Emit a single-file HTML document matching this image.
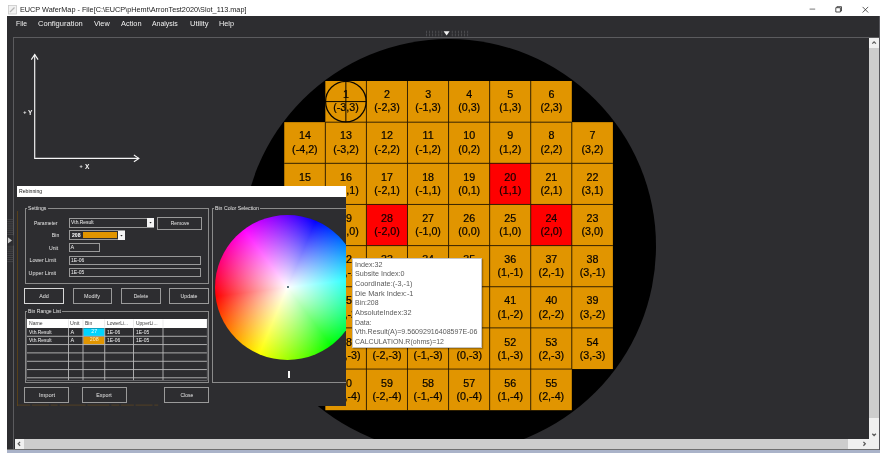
<!DOCTYPE html><html><head><meta charset="utf-8"><title>EUCP WaferMap</title><style>html,body{margin:0;padding:0}body{width:884px;height:456px;position:relative;overflow:hidden;background:#fff;font-family:"Liberation Sans", sans-serif;-webkit-font-smoothing:antialiased}span{display:block}</style></head><body><div style="position:absolute;left:0;top:0;width:884px;height:456px;will-change:transform"><div style="position:absolute;left:0.00px;top:0.00px;width:884.00px;height:456.00px;background:#fff"></div><svg style="position:absolute;left:7.8px;top:4.6px" width="10" height="10" viewBox="0 0 10 10"><rect x="0.5" y="0.5" width="8" height="8.5" fill="#f2f2f2" stroke="#c9c9c9" stroke-width="0.8"/><path d="M2 7 L6.5 2.5" stroke="#b5b5b5" stroke-width="1.2"/></svg><span id="t0" style="position:absolute;white-space:pre;line-height:1;font-size:7.8px;color:#1a1a1a;top:6.00px;left:19.50px;transform-origin:0 50%;transform:scaleX(0.9339);">EUCP WaferMap - File[C:\EUCP\pHemt\ArronTest2020\Slot_113.map]</span><svg style="position:absolute;left:800px;top:0" width="84" height="16" viewBox="0 0 84 16"><path d="M9.6 9.1 H15.2" stroke="#555" stroke-width="0.8" fill="none"/><path d="M35.8 7.7 h4.6 v4.3 h-4.6 z M36.9 7.7 v-1.0 h4.6 v4.3 h-1.1" stroke="#333" stroke-width="0.85" fill="none"/><path d="M62.6 6.9 l5.6 5.6 M68.2 6.9 l-5.6 5.6" stroke="#333" stroke-width="0.8" fill="none"/></svg><div style="position:absolute;left:7.00px;top:16.00px;width:873.00px;height:433.00px;background:#2d2d30"></div><div style="position:absolute;left:7.00px;top:448.50px;width:873.00px;height:1.60px;background:#6f6f6f"></div><div style="position:absolute;left:7.00px;top:450.00px;width:873.00px;height:2.80px;background:#aab3c9"></div><div style="position:absolute;left:879.20px;top:16.00px;width:0.90px;height:434.00px;background:#55555a"></div><span id="t1" style="position:absolute;white-space:pre;line-height:1;font-size:8.1px;color:#f1f1f1;top:19.65px;left:15.60px;transform-origin:0 50%;transform:scaleX(0.8354);">File</span><span id="t2" style="position:absolute;white-space:pre;line-height:1;font-size:8.1px;color:#f1f1f1;top:19.65px;left:37.60px;transform-origin:0 50%;transform:scaleX(0.9303);">Configuration</span><span id="t3" style="position:absolute;white-space:pre;line-height:1;font-size:8.1px;color:#f1f1f1;top:19.65px;left:94.00px;transform-origin:0 50%;transform:scaleX(0.9020);">View</span><span id="t4" style="position:absolute;white-space:pre;line-height:1;font-size:8.1px;color:#f1f1f1;top:19.65px;left:120.60px;transform-origin:0 50%;transform:scaleX(0.9156);">Action</span><span id="t5" style="position:absolute;white-space:pre;line-height:1;font-size:8.1px;color:#f1f1f1;top:19.65px;left:152.40px;transform-origin:0 50%;transform:scaleX(0.8560);">Analysis</span><span id="t6" style="position:absolute;white-space:pre;line-height:1;font-size:8.1px;color:#f1f1f1;top:19.65px;left:189.70px;transform-origin:0 50%;transform:scaleX(0.9345);">Utility</span><span id="t7" style="position:absolute;white-space:pre;line-height:1;font-size:8.1px;color:#f1f1f1;top:19.65px;left:219.40px;transform-origin:0 50%;transform:scaleX(0.9006);">Help</span><svg style="position:absolute;left:424px;top:29px" width="46" height="8" viewBox="424 29 46 8"><rect x="426.00" y="30.80" width="0.9" height="0.9" fill="#5d5d60"/><rect x="451.80" y="30.80" width="0.9" height="0.9" fill="#5d5d60"/><rect x="426.00" y="32.30" width="0.9" height="0.9" fill="#5d5d60"/><rect x="451.80" y="32.30" width="0.9" height="0.9" fill="#5d5d60"/><rect x="426.00" y="33.80" width="0.9" height="0.9" fill="#5d5d60"/><rect x="451.80" y="33.80" width="0.9" height="0.9" fill="#5d5d60"/><rect x="426.00" y="35.30" width="0.9" height="0.9" fill="#5d5d60"/><rect x="451.80" y="35.30" width="0.9" height="0.9" fill="#5d5d60"/><rect x="429.08" y="30.80" width="0.9" height="0.9" fill="#5d5d60"/><rect x="454.88" y="30.80" width="0.9" height="0.9" fill="#5d5d60"/><rect x="429.08" y="32.30" width="0.9" height="0.9" fill="#5d5d60"/><rect x="454.88" y="32.30" width="0.9" height="0.9" fill="#5d5d60"/><rect x="429.08" y="33.80" width="0.9" height="0.9" fill="#5d5d60"/><rect x="454.88" y="33.80" width="0.9" height="0.9" fill="#5d5d60"/><rect x="429.08" y="35.30" width="0.9" height="0.9" fill="#5d5d60"/><rect x="454.88" y="35.30" width="0.9" height="0.9" fill="#5d5d60"/><rect x="432.16" y="30.80" width="0.9" height="0.9" fill="#5d5d60"/><rect x="457.96" y="30.80" width="0.9" height="0.9" fill="#5d5d60"/><rect x="432.16" y="32.30" width="0.9" height="0.9" fill="#5d5d60"/><rect x="457.96" y="32.30" width="0.9" height="0.9" fill="#5d5d60"/><rect x="432.16" y="33.80" width="0.9" height="0.9" fill="#5d5d60"/><rect x="457.96" y="33.80" width="0.9" height="0.9" fill="#5d5d60"/><rect x="432.16" y="35.30" width="0.9" height="0.9" fill="#5d5d60"/><rect x="457.96" y="35.30" width="0.9" height="0.9" fill="#5d5d60"/><rect x="435.24" y="30.80" width="0.9" height="0.9" fill="#5d5d60"/><rect x="461.04" y="30.80" width="0.9" height="0.9" fill="#5d5d60"/><rect x="435.24" y="32.30" width="0.9" height="0.9" fill="#5d5d60"/><rect x="461.04" y="32.30" width="0.9" height="0.9" fill="#5d5d60"/><rect x="435.24" y="33.80" width="0.9" height="0.9" fill="#5d5d60"/><rect x="461.04" y="33.80" width="0.9" height="0.9" fill="#5d5d60"/><rect x="435.24" y="35.30" width="0.9" height="0.9" fill="#5d5d60"/><rect x="461.04" y="35.30" width="0.9" height="0.9" fill="#5d5d60"/><rect x="438.32" y="30.80" width="0.9" height="0.9" fill="#5d5d60"/><rect x="464.12" y="30.80" width="0.9" height="0.9" fill="#5d5d60"/><rect x="438.32" y="32.30" width="0.9" height="0.9" fill="#5d5d60"/><rect x="464.12" y="32.30" width="0.9" height="0.9" fill="#5d5d60"/><rect x="438.32" y="33.80" width="0.9" height="0.9" fill="#5d5d60"/><rect x="464.12" y="33.80" width="0.9" height="0.9" fill="#5d5d60"/><rect x="438.32" y="35.30" width="0.9" height="0.9" fill="#5d5d60"/><rect x="464.12" y="35.30" width="0.9" height="0.9" fill="#5d5d60"/><rect x="441.40" y="30.80" width="0.9" height="0.9" fill="#5d5d60"/><rect x="467.20" y="30.80" width="0.9" height="0.9" fill="#5d5d60"/><rect x="441.40" y="32.30" width="0.9" height="0.9" fill="#5d5d60"/><rect x="467.20" y="32.30" width="0.9" height="0.9" fill="#5d5d60"/><rect x="441.40" y="33.80" width="0.9" height="0.9" fill="#5d5d60"/><rect x="467.20" y="33.80" width="0.9" height="0.9" fill="#5d5d60"/><rect x="441.40" y="35.30" width="0.9" height="0.9" fill="#5d5d60"/><rect x="467.20" y="35.30" width="0.9" height="0.9" fill="#5d5d60"/><path d="M443.6 31.2 L449.6 31.2 L446.6 35.4 Z" fill="#f0f0f0"/></svg><div style="position:absolute;left:13.40px;top:36.90px;width:866.20px;height:1.10px;background:#5b5b5e"></div><div style="position:absolute;left:13.40px;top:36.90px;width:1.10px;height:412.00px;background:#5b5b5e"></div><svg style="position:absolute;left:7px;top:215px" width="7" height="50" viewBox="7 215 7 50"><rect x="7.3" y="219.30" width="5.9" height="0.75" fill="#4a4a4d"/><rect x="7.3" y="221.40" width="5.9" height="0.75" fill="#4a4a4d"/><rect x="7.3" y="223.50" width="5.9" height="0.75" fill="#4a4a4d"/><rect x="7.3" y="225.60" width="5.9" height="0.75" fill="#4a4a4d"/><rect x="7.3" y="227.70" width="5.9" height="0.75" fill="#4a4a4d"/><rect x="7.3" y="229.80" width="5.9" height="0.75" fill="#4a4a4d"/><rect x="7.3" y="231.90" width="5.9" height="0.75" fill="#4a4a4d"/><rect x="7.3" y="234.00" width="5.9" height="0.75" fill="#4a4a4d"/><rect x="7.3" y="236.10" width="5.9" height="0.75" fill="#4a4a4d"/><rect x="7.3" y="238.20" width="5.9" height="0.75" fill="#4a4a4d"/><rect x="7.3" y="240.30" width="5.9" height="0.75" fill="#4a4a4d"/><rect x="7.3" y="242.40" width="5.9" height="0.75" fill="#4a4a4d"/><rect x="7.3" y="244.50" width="5.9" height="0.75" fill="#4a4a4d"/><rect x="7.3" y="246.60" width="5.9" height="0.75" fill="#4a4a4d"/><rect x="7.3" y="248.70" width="5.9" height="0.75" fill="#4a4a4d"/><rect x="7.3" y="250.80" width="5.9" height="0.75" fill="#4a4a4d"/><rect x="7.3" y="252.90" width="5.9" height="0.75" fill="#4a4a4d"/><rect x="7.3" y="255.00" width="5.9" height="0.75" fill="#4a4a4d"/><rect x="7.3" y="257.10" width="5.9" height="0.75" fill="#4a4a4d"/><rect x="7.3" y="259.20" width="5.9" height="0.75" fill="#4a4a4d"/><rect x="7.3" y="261.30" width="5.9" height="0.75" fill="#4a4a4d"/><rect x="7" y="235.2" width="6.5" height="10.4" fill="#2d2d30"/><path d="M7.9 237.2 L12.0 240.4 L7.9 243.6 Z" fill="#c4c4c4"/></svg><div style="position:absolute;left:14.50px;top:38.00px;width:854.50px;height:401.00px;overflow:hidden;background:#2d2d30"><div style="position:absolute;left:-14.50px;top:-38.00px;width:884px;height:456px"><div style="position:absolute;left:242.00px;top:38.90px;width:414.40px;height:414.40px;background:#000;border-radius:50%"></div><svg style="position:absolute;left:0;top:0;will-change:transform" width="884" height="456" viewBox="0 0 884 456" font-family='&quot;Liberation Sans&quot;, sans-serif' font-size="10.7" text-anchor="middle" fill="#1c1200"><rect x="325.33" y="81.00" width="41.08" height="41.15" fill="#e19500"/><rect x="366.41" y="81.00" width="41.08" height="41.15" fill="#e19500"/><rect x="407.49" y="81.00" width="41.08" height="41.15" fill="#e19500"/><rect x="448.57" y="81.00" width="41.08" height="41.15" fill="#e19500"/><rect x="489.65" y="81.00" width="41.08" height="41.15" fill="#e19500"/><rect x="530.73" y="81.00" width="41.08" height="41.15" fill="#e19500"/><rect x="571.81" y="122.15" width="41.08" height="41.15" fill="#e19500"/><rect x="530.73" y="122.15" width="41.08" height="41.15" fill="#e19500"/><rect x="489.65" y="122.15" width="41.08" height="41.15" fill="#e19500"/><rect x="448.57" y="122.15" width="41.08" height="41.15" fill="#e19500"/><rect x="407.49" y="122.15" width="41.08" height="41.15" fill="#e19500"/><rect x="366.41" y="122.15" width="41.08" height="41.15" fill="#e19500"/><rect x="325.33" y="122.15" width="41.08" height="41.15" fill="#e19500"/><rect x="284.25" y="122.15" width="41.08" height="41.15" fill="#e19500"/><rect x="284.25" y="163.30" width="41.08" height="41.15" fill="#e19500"/><rect x="325.33" y="163.30" width="41.08" height="41.15" fill="#e19500"/><rect x="366.41" y="163.30" width="41.08" height="41.15" fill="#e19500"/><rect x="407.49" y="163.30" width="41.08" height="41.15" fill="#e19500"/><rect x="448.57" y="163.30" width="41.08" height="41.15" fill="#e19500"/><rect x="489.65" y="163.30" width="41.08" height="41.15" fill="#ff0000"/><rect x="530.73" y="163.30" width="41.08" height="41.15" fill="#e19500"/><rect x="571.81" y="163.30" width="41.08" height="41.15" fill="#e19500"/><rect x="571.81" y="204.45" width="41.08" height="41.15" fill="#e19500"/><rect x="530.73" y="204.45" width="41.08" height="41.15" fill="#ff0000"/><rect x="489.65" y="204.45" width="41.08" height="41.15" fill="#e19500"/><rect x="448.57" y="204.45" width="41.08" height="41.15" fill="#e19500"/><rect x="407.49" y="204.45" width="41.08" height="41.15" fill="#e19500"/><rect x="366.41" y="204.45" width="41.08" height="41.15" fill="#ff0000"/><rect x="325.33" y="204.45" width="41.08" height="41.15" fill="#e19500"/><rect x="284.25" y="204.45" width="41.08" height="41.15" fill="#e19500"/><rect x="284.25" y="245.60" width="41.08" height="41.15" fill="#e19500"/><rect x="325.33" y="245.60" width="41.08" height="41.15" fill="#e19500"/><rect x="366.41" y="245.60" width="41.08" height="41.15" fill="#e19500"/><rect x="407.49" y="245.60" width="41.08" height="41.15" fill="#e19500"/><rect x="448.57" y="245.60" width="41.08" height="41.15" fill="#e19500"/><rect x="489.65" y="245.60" width="41.08" height="41.15" fill="#e19500"/><rect x="530.73" y="245.60" width="41.08" height="41.15" fill="#e19500"/><rect x="571.81" y="245.60" width="41.08" height="41.15" fill="#e19500"/><rect x="571.81" y="286.75" width="41.08" height="41.15" fill="#e19500"/><rect x="530.73" y="286.75" width="41.08" height="41.15" fill="#e19500"/><rect x="489.65" y="286.75" width="41.08" height="41.15" fill="#e19500"/><rect x="448.57" y="286.75" width="41.08" height="41.15" fill="#e19500"/><rect x="407.49" y="286.75" width="41.08" height="41.15" fill="#e19500"/><rect x="366.41" y="286.75" width="41.08" height="41.15" fill="#e19500"/><rect x="325.33" y="286.75" width="41.08" height="41.15" fill="#e19500"/><rect x="284.25" y="286.75" width="41.08" height="41.15" fill="#e19500"/><rect x="284.25" y="327.90" width="41.08" height="41.15" fill="#e19500"/><rect x="325.33" y="327.90" width="41.08" height="41.15" fill="#e19500"/><rect x="366.41" y="327.90" width="41.08" height="41.15" fill="#e19500"/><rect x="407.49" y="327.90" width="41.08" height="41.15" fill="#e19500"/><rect x="448.57" y="327.90" width="41.08" height="41.15" fill="#e19500"/><rect x="489.65" y="327.90" width="41.08" height="41.15" fill="#e19500"/><rect x="530.73" y="327.90" width="41.08" height="41.15" fill="#e19500"/><rect x="571.81" y="327.90" width="41.08" height="41.15" fill="#e19500"/><rect x="530.73" y="369.05" width="41.08" height="41.15" fill="#e19500"/><rect x="489.65" y="369.05" width="41.08" height="41.15" fill="#e19500"/><rect x="448.57" y="369.05" width="41.08" height="41.15" fill="#e19500"/><rect x="407.49" y="369.05" width="41.08" height="41.15" fill="#e19500"/><rect x="366.41" y="369.05" width="41.08" height="41.15" fill="#e19500"/><rect x="325.33" y="369.05" width="41.08" height="41.15" fill="#e19500"/><rect x="365.91" y="81.00" width="1" height="41.15" fill="#1e1300" opacity="0.8"/><rect x="325.33" y="121.65" width="41.08" height="1" fill="#1e1300" opacity="0.8"/><rect x="406.99" y="81.00" width="1" height="41.15" fill="#1e1300" opacity="0.8"/><rect x="366.41" y="121.65" width="41.08" height="1" fill="#1e1300" opacity="0.8"/><rect x="448.07" y="81.00" width="1" height="41.15" fill="#1e1300" opacity="0.8"/><rect x="407.49" y="121.65" width="41.08" height="1" fill="#1e1300" opacity="0.8"/><rect x="489.15" y="81.00" width="1" height="41.15" fill="#1e1300" opacity="0.8"/><rect x="448.57" y="121.65" width="41.08" height="1" fill="#1e1300" opacity="0.8"/><rect x="530.23" y="81.00" width="1" height="41.15" fill="#1e1300" opacity="0.8"/><rect x="489.65" y="121.65" width="41.08" height="1" fill="#1e1300" opacity="0.8"/><rect x="530.73" y="121.65" width="41.08" height="1" fill="#1e1300" opacity="0.8"/><rect x="571.81" y="162.80" width="41.08" height="1" fill="#1e1300" opacity="0.8"/><rect x="571.31" y="122.15" width="1" height="41.15" fill="#1e1300" opacity="0.8"/><rect x="530.73" y="162.80" width="41.08" height="1" fill="#1e1300" opacity="0.8"/><rect x="530.23" y="122.15" width="1" height="41.15" fill="#1e1300" opacity="0.8"/><rect x="489.65" y="162.80" width="41.08" height="1" fill="#1e1300" opacity="0.8"/><rect x="489.15" y="122.15" width="1" height="41.15" fill="#1e1300" opacity="0.8"/><rect x="448.57" y="162.80" width="41.08" height="1" fill="#1e1300" opacity="0.8"/><rect x="448.07" y="122.15" width="1" height="41.15" fill="#1e1300" opacity="0.8"/><rect x="407.49" y="162.80" width="41.08" height="1" fill="#1e1300" opacity="0.8"/><rect x="406.99" y="122.15" width="1" height="41.15" fill="#1e1300" opacity="0.8"/><rect x="366.41" y="162.80" width="41.08" height="1" fill="#1e1300" opacity="0.8"/><rect x="365.91" y="122.15" width="1" height="41.15" fill="#1e1300" opacity="0.8"/><rect x="325.33" y="162.80" width="41.08" height="1" fill="#1e1300" opacity="0.8"/><rect x="324.83" y="122.15" width="1" height="41.15" fill="#1e1300" opacity="0.8"/><rect x="284.25" y="162.80" width="41.08" height="1" fill="#1e1300" opacity="0.8"/><rect x="324.83" y="163.30" width="1" height="41.15" fill="#1e1300" opacity="0.8"/><rect x="284.25" y="203.95" width="41.08" height="1" fill="#1e1300" opacity="0.8"/><rect x="365.91" y="163.30" width="1" height="41.15" fill="#1e1300" opacity="0.8"/><rect x="325.33" y="203.95" width="41.08" height="1" fill="#1e1300" opacity="0.8"/><rect x="406.99" y="163.30" width="1" height="41.15" fill="#1e1300" opacity="0.8"/><rect x="366.41" y="203.95" width="41.08" height="1" fill="#1e1300" opacity="0.8"/><rect x="448.07" y="163.30" width="1" height="41.15" fill="#1e1300" opacity="0.8"/><rect x="407.49" y="203.95" width="41.08" height="1" fill="#1e1300" opacity="0.8"/><rect x="489.15" y="163.30" width="1" height="41.15" fill="#1e1300" opacity="0.8"/><rect x="448.57" y="203.95" width="41.08" height="1" fill="#1e1300" opacity="0.8"/><rect x="530.23" y="163.30" width="1" height="41.15" fill="#1e1300" opacity="0.8"/><rect x="489.65" y="203.95" width="41.08" height="1" fill="#1e1300" opacity="0.8"/><rect x="571.31" y="163.30" width="1" height="41.15" fill="#1e1300" opacity="0.8"/><rect x="530.73" y="203.95" width="41.08" height="1" fill="#1e1300" opacity="0.8"/><rect x="571.81" y="203.95" width="41.08" height="1" fill="#1e1300" opacity="0.8"/><rect x="571.81" y="245.10" width="41.08" height="1" fill="#1e1300" opacity="0.8"/><rect x="571.31" y="204.45" width="1" height="41.15" fill="#1e1300" opacity="0.8"/><rect x="530.73" y="245.10" width="41.08" height="1" fill="#1e1300" opacity="0.8"/><rect x="530.23" y="204.45" width="1" height="41.15" fill="#1e1300" opacity="0.8"/><rect x="489.65" y="245.10" width="41.08" height="1" fill="#1e1300" opacity="0.8"/><rect x="489.15" y="204.45" width="1" height="41.15" fill="#1e1300" opacity="0.8"/><rect x="448.57" y="245.10" width="41.08" height="1" fill="#1e1300" opacity="0.8"/><rect x="448.07" y="204.45" width="1" height="41.15" fill="#1e1300" opacity="0.8"/><rect x="407.49" y="245.10" width="41.08" height="1" fill="#1e1300" opacity="0.8"/><rect x="406.99" y="204.45" width="1" height="41.15" fill="#1e1300" opacity="0.8"/><rect x="366.41" y="245.10" width="41.08" height="1" fill="#1e1300" opacity="0.8"/><rect x="365.91" y="204.45" width="1" height="41.15" fill="#1e1300" opacity="0.8"/><rect x="325.33" y="245.10" width="41.08" height="1" fill="#1e1300" opacity="0.8"/><rect x="324.83" y="204.45" width="1" height="41.15" fill="#1e1300" opacity="0.8"/><rect x="284.25" y="245.10" width="41.08" height="1" fill="#1e1300" opacity="0.8"/><rect x="324.83" y="245.60" width="1" height="41.15" fill="#1e1300" opacity="0.8"/><rect x="284.25" y="286.25" width="41.08" height="1" fill="#1e1300" opacity="0.8"/><rect x="365.91" y="245.60" width="1" height="41.15" fill="#1e1300" opacity="0.8"/><rect x="325.33" y="286.25" width="41.08" height="1" fill="#1e1300" opacity="0.8"/><rect x="406.99" y="245.60" width="1" height="41.15" fill="#1e1300" opacity="0.8"/><rect x="366.41" y="286.25" width="41.08" height="1" fill="#1e1300" opacity="0.8"/><rect x="448.07" y="245.60" width="1" height="41.15" fill="#1e1300" opacity="0.8"/><rect x="407.49" y="286.25" width="41.08" height="1" fill="#1e1300" opacity="0.8"/><rect x="489.15" y="245.60" width="1" height="41.15" fill="#1e1300" opacity="0.8"/><rect x="448.57" y="286.25" width="41.08" height="1" fill="#1e1300" opacity="0.8"/><rect x="530.23" y="245.60" width="1" height="41.15" fill="#1e1300" opacity="0.8"/><rect x="489.65" y="286.25" width="41.08" height="1" fill="#1e1300" opacity="0.8"/><rect x="571.31" y="245.60" width="1" height="41.15" fill="#1e1300" opacity="0.8"/><rect x="530.73" y="286.25" width="41.08" height="1" fill="#1e1300" opacity="0.8"/><rect x="571.81" y="286.25" width="41.08" height="1" fill="#1e1300" opacity="0.8"/><rect x="571.81" y="327.40" width="41.08" height="1" fill="#1e1300" opacity="0.8"/><rect x="571.31" y="286.75" width="1" height="41.15" fill="#1e1300" opacity="0.8"/><rect x="530.73" y="327.40" width="41.08" height="1" fill="#1e1300" opacity="0.8"/><rect x="530.23" y="286.75" width="1" height="41.15" fill="#1e1300" opacity="0.8"/><rect x="489.65" y="327.40" width="41.08" height="1" fill="#1e1300" opacity="0.8"/><rect x="489.15" y="286.75" width="1" height="41.15" fill="#1e1300" opacity="0.8"/><rect x="448.57" y="327.40" width="41.08" height="1" fill="#1e1300" opacity="0.8"/><rect x="448.07" y="286.75" width="1" height="41.15" fill="#1e1300" opacity="0.8"/><rect x="407.49" y="327.40" width="41.08" height="1" fill="#1e1300" opacity="0.8"/><rect x="406.99" y="286.75" width="1" height="41.15" fill="#1e1300" opacity="0.8"/><rect x="366.41" y="327.40" width="41.08" height="1" fill="#1e1300" opacity="0.8"/><rect x="365.91" y="286.75" width="1" height="41.15" fill="#1e1300" opacity="0.8"/><rect x="325.33" y="327.40" width="41.08" height="1" fill="#1e1300" opacity="0.8"/><rect x="324.83" y="286.75" width="1" height="41.15" fill="#1e1300" opacity="0.8"/><rect x="284.25" y="327.40" width="41.08" height="1" fill="#1e1300" opacity="0.8"/><rect x="324.83" y="327.90" width="1" height="41.15" fill="#1e1300" opacity="0.8"/><rect x="365.91" y="327.90" width="1" height="41.15" fill="#1e1300" opacity="0.8"/><rect x="325.33" y="368.55" width="41.08" height="1" fill="#1e1300" opacity="0.8"/><rect x="406.99" y="327.90" width="1" height="41.15" fill="#1e1300" opacity="0.8"/><rect x="366.41" y="368.55" width="41.08" height="1" fill="#1e1300" opacity="0.8"/><rect x="448.07" y="327.90" width="1" height="41.15" fill="#1e1300" opacity="0.8"/><rect x="407.49" y="368.55" width="41.08" height="1" fill="#1e1300" opacity="0.8"/><rect x="489.15" y="327.90" width="1" height="41.15" fill="#1e1300" opacity="0.8"/><rect x="448.57" y="368.55" width="41.08" height="1" fill="#1e1300" opacity="0.8"/><rect x="530.23" y="327.90" width="1" height="41.15" fill="#1e1300" opacity="0.8"/><rect x="489.65" y="368.55" width="41.08" height="1" fill="#1e1300" opacity="0.8"/><rect x="571.31" y="327.90" width="1" height="41.15" fill="#1e1300" opacity="0.8"/><rect x="530.73" y="368.55" width="41.08" height="1" fill="#1e1300" opacity="0.8"/><rect x="530.23" y="369.05" width="1" height="41.15" fill="#1e1300" opacity="0.8"/><rect x="489.15" y="369.05" width="1" height="41.15" fill="#1e1300" opacity="0.8"/><rect x="448.07" y="369.05" width="1" height="41.15" fill="#1e1300" opacity="0.8"/><rect x="406.99" y="369.05" width="1" height="41.15" fill="#1e1300" opacity="0.8"/><rect x="365.91" y="369.05" width="1" height="41.15" fill="#1e1300" opacity="0.8"/><text x="345.97" y="98.10" fill="#080400" stroke="#080400" stroke-width="0.22">1</text><text x="345.97" y="111.30" fill="#080400" stroke="#080400" stroke-width="0.22">(-3,3)</text><text x="387.05" y="98.10" fill="#080400" stroke="#080400" stroke-width="0.22">2</text><text x="387.05" y="111.30" fill="#080400" stroke="#080400" stroke-width="0.22">(-2,3)</text><text x="428.13" y="98.10" fill="#080400" stroke="#080400" stroke-width="0.22">3</text><text x="428.13" y="111.30" fill="#080400" stroke="#080400" stroke-width="0.22">(-1,3)</text><text x="469.21" y="98.10" fill="#080400" stroke="#080400" stroke-width="0.22">4</text><text x="469.21" y="111.30" fill="#080400" stroke="#080400" stroke-width="0.22">(0,3)</text><text x="510.29" y="98.10" fill="#080400" stroke="#080400" stroke-width="0.22">5</text><text x="510.29" y="111.30" fill="#080400" stroke="#080400" stroke-width="0.22">(1,3)</text><text x="551.37" y="98.10" fill="#080400" stroke="#080400" stroke-width="0.22">6</text><text x="551.37" y="111.30" fill="#080400" stroke="#080400" stroke-width="0.22">(2,3)</text><text x="592.45" y="139.35" fill="#080400" stroke="#080400" stroke-width="0.22">7</text><text x="592.45" y="152.55" fill="#080400" stroke="#080400" stroke-width="0.22">(3,2)</text><text x="551.37" y="139.35" fill="#080400" stroke="#080400" stroke-width="0.22">8</text><text x="551.37" y="152.55" fill="#080400" stroke="#080400" stroke-width="0.22">(2,2)</text><text x="510.29" y="139.35" fill="#080400" stroke="#080400" stroke-width="0.22">9</text><text x="510.29" y="152.55" fill="#080400" stroke="#080400" stroke-width="0.22">(1,2)</text><text x="469.21" y="139.35" fill="#080400" stroke="#080400" stroke-width="0.22">10</text><text x="469.21" y="152.55" fill="#080400" stroke="#080400" stroke-width="0.22">(0,2)</text><text x="428.13" y="139.35" fill="#080400" stroke="#080400" stroke-width="0.22">11</text><text x="428.13" y="152.55" fill="#080400" stroke="#080400" stroke-width="0.22">(-1,2)</text><text x="387.05" y="139.35" fill="#080400" stroke="#080400" stroke-width="0.22">12</text><text x="387.05" y="152.55" fill="#080400" stroke="#080400" stroke-width="0.22">(-2,2)</text><text x="345.97" y="139.35" fill="#080400" stroke="#080400" stroke-width="0.22">13</text><text x="345.97" y="152.55" fill="#080400" stroke="#080400" stroke-width="0.22">(-3,2)</text><text x="304.89" y="139.35" fill="#080400" stroke="#080400" stroke-width="0.22">14</text><text x="304.89" y="152.55" fill="#080400" stroke="#080400" stroke-width="0.22">(-4,2)</text><text x="304.89" y="180.60" fill="#080400" stroke="#080400" stroke-width="0.22">15</text><text x="304.89" y="193.80" fill="#080400" stroke="#080400" stroke-width="0.22">(-4,1)</text><text x="345.97" y="180.60" fill="#080400" stroke="#080400" stroke-width="0.22">16</text><text x="345.97" y="193.80" fill="#080400" stroke="#080400" stroke-width="0.22">(-3,1)</text><text x="387.05" y="180.60" fill="#080400" stroke="#080400" stroke-width="0.22">17</text><text x="387.05" y="193.80" fill="#080400" stroke="#080400" stroke-width="0.22">(-2,1)</text><text x="428.13" y="180.60" fill="#080400" stroke="#080400" stroke-width="0.22">18</text><text x="428.13" y="193.80" fill="#080400" stroke="#080400" stroke-width="0.22">(-1,1)</text><text x="469.21" y="180.60" fill="#080400" stroke="#080400" stroke-width="0.22">19</text><text x="469.21" y="193.80" fill="#080400" stroke="#080400" stroke-width="0.22">(0,1)</text><text x="510.29" y="180.60" fill="#120000" stroke="#120000" stroke-width="0.22">20</text><text x="510.29" y="193.80" fill="#120000" stroke="#120000" stroke-width="0.22">(1,1)</text><text x="551.37" y="180.60" fill="#080400" stroke="#080400" stroke-width="0.22">21</text><text x="551.37" y="193.80" fill="#080400" stroke="#080400" stroke-width="0.22">(2,1)</text><text x="592.45" y="180.60" fill="#080400" stroke="#080400" stroke-width="0.22">22</text><text x="592.45" y="193.80" fill="#080400" stroke="#080400" stroke-width="0.22">(3,1)</text><text x="592.45" y="221.85" fill="#080400" stroke="#080400" stroke-width="0.22">23</text><text x="592.45" y="235.05" fill="#080400" stroke="#080400" stroke-width="0.22">(3,0)</text><text x="551.37" y="221.85" fill="#120000" stroke="#120000" stroke-width="0.22">24</text><text x="551.37" y="235.05" fill="#120000" stroke="#120000" stroke-width="0.22">(2,0)</text><text x="510.29" y="221.85" fill="#080400" stroke="#080400" stroke-width="0.22">25</text><text x="510.29" y="235.05" fill="#080400" stroke="#080400" stroke-width="0.22">(1,0)</text><text x="469.21" y="221.85" fill="#080400" stroke="#080400" stroke-width="0.22">26</text><text x="469.21" y="235.05" fill="#080400" stroke="#080400" stroke-width="0.22">(0,0)</text><text x="428.13" y="221.85" fill="#080400" stroke="#080400" stroke-width="0.22">27</text><text x="428.13" y="235.05" fill="#080400" stroke="#080400" stroke-width="0.22">(-1,0)</text><text x="387.05" y="221.85" fill="#120000" stroke="#120000" stroke-width="0.22">28</text><text x="387.05" y="235.05" fill="#120000" stroke="#120000" stroke-width="0.22">(-2,0)</text><text x="345.97" y="221.85" fill="#080400" stroke="#080400" stroke-width="0.22">29</text><text x="345.97" y="235.05" fill="#080400" stroke="#080400" stroke-width="0.22">(-3,0)</text><text x="304.89" y="221.85" fill="#080400" stroke="#080400" stroke-width="0.22">30</text><text x="304.89" y="235.05" fill="#080400" stroke="#080400" stroke-width="0.22">(-4,0)</text><text x="304.89" y="263.10" fill="#080400" stroke="#080400" stroke-width="0.22">31</text><text x="304.89" y="276.30" fill="#080400" stroke="#080400" stroke-width="0.22">(-4,-1)</text><text x="345.97" y="263.10" fill="#080400" stroke="#080400" stroke-width="0.22">32</text><text x="345.97" y="276.30" fill="#080400" stroke="#080400" stroke-width="0.22">(-3,-1)</text><text x="387.05" y="263.10" fill="#080400" stroke="#080400" stroke-width="0.22">33</text><text x="387.05" y="276.30" fill="#080400" stroke="#080400" stroke-width="0.22">(-2,-1)</text><text x="428.13" y="263.10" fill="#080400" stroke="#080400" stroke-width="0.22">34</text><text x="428.13" y="276.30" fill="#080400" stroke="#080400" stroke-width="0.22">(-1,-1)</text><text x="469.21" y="263.10" fill="#080400" stroke="#080400" stroke-width="0.22">35</text><text x="469.21" y="276.30" fill="#080400" stroke="#080400" stroke-width="0.22">(0,-1)</text><text x="510.29" y="263.10" fill="#080400" stroke="#080400" stroke-width="0.22">36</text><text x="510.29" y="276.30" fill="#080400" stroke="#080400" stroke-width="0.22">(1,-1)</text><text x="551.37" y="263.10" fill="#080400" stroke="#080400" stroke-width="0.22">37</text><text x="551.37" y="276.30" fill="#080400" stroke="#080400" stroke-width="0.22">(2,-1)</text><text x="592.45" y="263.10" fill="#080400" stroke="#080400" stroke-width="0.22">38</text><text x="592.45" y="276.30" fill="#080400" stroke="#080400" stroke-width="0.22">(3,-1)</text><text x="592.45" y="304.35" fill="#080400" stroke="#080400" stroke-width="0.22">39</text><text x="592.45" y="317.55" fill="#080400" stroke="#080400" stroke-width="0.22">(3,-2)</text><text x="551.37" y="304.35" fill="#080400" stroke="#080400" stroke-width="0.22">40</text><text x="551.37" y="317.55" fill="#080400" stroke="#080400" stroke-width="0.22">(2,-2)</text><text x="510.29" y="304.35" fill="#080400" stroke="#080400" stroke-width="0.22">41</text><text x="510.29" y="317.55" fill="#080400" stroke="#080400" stroke-width="0.22">(1,-2)</text><text x="469.21" y="304.35" fill="#080400" stroke="#080400" stroke-width="0.22">42</text><text x="469.21" y="317.55" fill="#080400" stroke="#080400" stroke-width="0.22">(0,-2)</text><text x="428.13" y="304.35" fill="#080400" stroke="#080400" stroke-width="0.22">43</text><text x="428.13" y="317.55" fill="#080400" stroke="#080400" stroke-width="0.22">(-1,-2)</text><text x="387.05" y="304.35" fill="#080400" stroke="#080400" stroke-width="0.22">44</text><text x="387.05" y="317.55" fill="#080400" stroke="#080400" stroke-width="0.22">(-2,-2)</text><text x="345.97" y="304.35" fill="#080400" stroke="#080400" stroke-width="0.22">45</text><text x="345.97" y="317.55" fill="#080400" stroke="#080400" stroke-width="0.22">(-3,-2)</text><text x="304.89" y="304.35" fill="#080400" stroke="#080400" stroke-width="0.22">46</text><text x="304.89" y="317.55" fill="#080400" stroke="#080400" stroke-width="0.22">(-4,-2)</text><text x="304.89" y="345.60" fill="#080400" stroke="#080400" stroke-width="0.22">47</text><text x="304.89" y="358.80" fill="#080400" stroke="#080400" stroke-width="0.22">(-4,-3)</text><text x="345.97" y="345.60" fill="#080400" stroke="#080400" stroke-width="0.22">48</text><text x="345.97" y="358.80" fill="#080400" stroke="#080400" stroke-width="0.22">(-3,-3)</text><text x="387.05" y="345.60" fill="#080400" stroke="#080400" stroke-width="0.22">49</text><text x="387.05" y="358.80" fill="#080400" stroke="#080400" stroke-width="0.22">(-2,-3)</text><text x="428.13" y="345.60" fill="#080400" stroke="#080400" stroke-width="0.22">50</text><text x="428.13" y="358.80" fill="#080400" stroke="#080400" stroke-width="0.22">(-1,-3)</text><text x="469.21" y="345.60" fill="#080400" stroke="#080400" stroke-width="0.22">51</text><text x="469.21" y="358.80" fill="#080400" stroke="#080400" stroke-width="0.22">(0,-3)</text><text x="510.29" y="345.60" fill="#080400" stroke="#080400" stroke-width="0.22">52</text><text x="510.29" y="358.80" fill="#080400" stroke="#080400" stroke-width="0.22">(1,-3)</text><text x="551.37" y="345.60" fill="#080400" stroke="#080400" stroke-width="0.22">53</text><text x="551.37" y="358.80" fill="#080400" stroke="#080400" stroke-width="0.22">(2,-3)</text><text x="592.45" y="345.60" fill="#080400" stroke="#080400" stroke-width="0.22">54</text><text x="592.45" y="358.80" fill="#080400" stroke="#080400" stroke-width="0.22">(3,-3)</text><text x="551.37" y="386.85" fill="#080400" stroke="#080400" stroke-width="0.22">55</text><text x="551.37" y="400.05" fill="#080400" stroke="#080400" stroke-width="0.22">(2,-4)</text><text x="510.29" y="386.85" fill="#080400" stroke="#080400" stroke-width="0.22">56</text><text x="510.29" y="400.05" fill="#080400" stroke="#080400" stroke-width="0.22">(1,-4)</text><text x="469.21" y="386.85" fill="#080400" stroke="#080400" stroke-width="0.22">57</text><text x="469.21" y="400.05" fill="#080400" stroke="#080400" stroke-width="0.22">(0,-4)</text><text x="428.13" y="386.85" fill="#080400" stroke="#080400" stroke-width="0.22">58</text><text x="428.13" y="400.05" fill="#080400" stroke="#080400" stroke-width="0.22">(-1,-4)</text><text x="387.05" y="386.85" fill="#080400" stroke="#080400" stroke-width="0.22">59</text><text x="387.05" y="400.05" fill="#080400" stroke="#080400" stroke-width="0.22">(-2,-4)</text><text x="345.97" y="386.85" fill="#080400" stroke="#080400" stroke-width="0.22">60</text><text x="345.97" y="400.05" fill="#080400" stroke="#080400" stroke-width="0.22">(-3,-4)</text><circle cx="345.87" cy="101.58" r="20.3" fill="none" stroke="#0a0600" stroke-width="1.25"/><path d="M345.87 81.38 V121.78 M325.67 101.58 H366.07" stroke="#0a0600" stroke-width="1" fill="none"/></svg><svg style="position:absolute;left:20px;top:50px" width="130" height="125" viewBox="20 50 130 125"><path d="M34.7 54.6 V158.4 H138.8" stroke="#f6f6f6" stroke-width="1.15" fill="none"/><path d="M31.3 59.6 L34.7 54.6 L38.1 59.6" stroke="#f6f6f6" stroke-width="1.1" fill="none"/><path d="M133.9 155.0 L138.9 158.4 L133.9 161.8" stroke="#f6f6f6" stroke-width="1.1" fill="none"/></svg><span id="t8" style="position:absolute;white-space:pre;line-height:1;font-size:5.4px;color:#f4f4f4;font-weight:bold;top:110.30px;left:23.20px;transform-origin:0 50%;">+</span><span id="t9" style="position:absolute;white-space:pre;line-height:1;font-size:6.6px;color:#f4f4f4;font-weight:bold;top:110.30px;left:28.00px;transform-origin:0 50%;">Y</span><span id="t10" style="position:absolute;white-space:pre;line-height:1;font-size:5.4px;color:#f4f4f4;font-weight:bold;top:164.20px;left:79.60px;transform-origin:0 50%;">+</span><span id="t11" style="position:absolute;white-space:pre;line-height:1;font-size:6.6px;color:#f4f4f4;font-weight:bold;top:164.10px;left:85.00px;transform-origin:0 50%;">X</span><div style="position:absolute;left:17.00px;top:186.00px;width:329.00px;height:219.60px;overflow:hidden;background:#2d2d30"><div style="position:absolute;left:-17.00px;top:-186.00px;width:884px;height:456px"><div style="position:absolute;left:17.00px;top:186.00px;width:329.00px;height:10.90px;background:#fff"></div><span id="t12" style="position:absolute;white-space:pre;line-height:1;font-size:5.9px;color:#1a1a1a;top:188.55px;left:19.00px;transform-origin:0 50%;transform:scaleX(0.8744);">Rebinning</span><div style="position:absolute;left:17.30px;top:211.00px;width:0.60px;height:194.50px;background:#57401a"></div><svg style="position:absolute;left:17px;top:403px" width="145" height="4" viewBox="17 403 145 4"><path d="M17.3 405.1 H158.2" stroke="#6b4e1c" stroke-width="0.6" stroke-dasharray="13 1.6 17 1.8 7 2 26 1.6 22 2 8 1.6" fill="none"/></svg><div style="position:absolute;left:24.50px;top:207.80px;width:184.80px;height:75.80px;border:0.9px solid #8a8a8a;box-sizing:border-box"></div><div style="position:absolute;left:26.80px;top:206.80px;width:21.00px;height:3.40px;background:#2d2d30"></div><span id="t13" style="position:absolute;white-space:pre;line-height:1;font-size:5.6px;color:#e6e6e6;top:205.90px;left:28.00px;transform-origin:0 50%;transform:scaleX(0.9100);">Settings</span><div style="position:absolute;left:211.70px;top:207.80px;width:137.30px;height:175.00px;border:0.9px solid #8a8a8a;box-sizing:border-box"></div><div style="position:absolute;left:213.80px;top:206.80px;width:46.60px;height:3.40px;background:#2d2d30"></div><span id="t14" style="position:absolute;white-space:pre;line-height:1;font-size:5.6px;color:#e6e6e6;top:205.90px;left:215.00px;transform-origin:0 50%;transform:scaleX(0.9248);">Bin Color Selection</span><div style="position:absolute;left:24.50px;top:311.00px;width:184.80px;height:71.60px;border:0.9px solid #8a8a8a;box-sizing:border-box"></div><div style="position:absolute;left:26.80px;top:310.00px;width:35.60px;height:3.40px;background:#2d2d30"></div><span id="t15" style="position:absolute;white-space:pre;line-height:1;font-size:5.6px;color:#e6e6e6;top:309.10px;left:28.00px;transform-origin:0 50%;transform:scaleX(0.9068);">Bin Range List</span><span id="t16" style="position:absolute;white-space:pre;line-height:1;font-size:5.7px;color:#e6e6e6;top:220.95px;right:826.40px;transform-origin:100% 50%;transform:scaleX(0.8885);">Parameter</span><span id="t17" style="position:absolute;white-space:pre;line-height:1;font-size:5.7px;color:#e6e6e6;top:233.35px;right:824.40px;transform-origin:100% 50%;transform:scaleX(0.8987);">Bin</span><span id="t18" style="position:absolute;white-space:pre;line-height:1;font-size:5.7px;color:#e6e6e6;top:245.75px;right:826.00px;transform-origin:100% 50%;transform:scaleX(0.9086);">Unit</span><span id="t19" style="position:absolute;white-space:pre;line-height:1;font-size:5.7px;color:#e6e6e6;top:258.45px;right:827.70px;transform-origin:100% 50%;transform:scaleX(0.9143);">Lower Limit</span><span id="t20" style="position:absolute;white-space:pre;line-height:1;font-size:5.7px;color:#e6e6e6;top:270.75px;right:827.70px;transform-origin:100% 50%;transform:scaleX(0.9487);">Upper Limit</span><div style="position:absolute;left:69.10px;top:217.50px;width:85.10px;height:10.30px;border:0.9px solid #9a9a9a;box-sizing:border-box;"></div><div style="position:absolute;left:147.00px;top:218.10px;width:6.80px;height:9.10px;background:#f4f4f4"></div><svg style="position:absolute;left:147px;top:218px" width="7" height="10" viewBox="0 0 7 10"><path d="M2.4 4.1 H4.7 L3.55 5.6 Z" fill="#222"/></svg><span id="t21" style="position:absolute;white-space:pre;line-height:1;font-size:5.5px;color:#f0f0f0;top:219.95px;left:70.60px;transform-origin:0 50%;transform:scaleX(0.8906);">Vth.Result</span><div style="position:absolute;left:157.00px;top:217.10px;width:45.30px;height:12.60px;border:0.9px solid #9a9a9a;box-sizing:border-box;"></div><span id="t22" style="position:absolute;white-space:pre;line-height:1;font-size:5.7px;color:#e6e6e6;top:221.05px;left:179.70px;transform-origin:50% 50%;transform:translateX(-50%) scaleX(0.8779);">Remove</span><div style="position:absolute;left:69.10px;top:230.00px;width:56.00px;height:10.10px;border:0.9px solid #9a9a9a;box-sizing:border-box;"></div><div style="position:absolute;left:117.90px;top:230.50px;width:6.90px;height:9.20px;background:#f4f4f4"></div><svg style="position:absolute;left:118px;top:230.5px" width="7" height="10" viewBox="0 0 7 10"><path d="M2.3 4.1 H4.6 L3.45 5.6 Z" fill="#222"/></svg><div style="position:absolute;left:82.90px;top:231.80px;width:34.40px;height:6.40px;background:#e19500"></div><span id="t23" style="position:absolute;white-space:pre;line-height:1;font-size:5.4px;color:#ffffff;font-weight:bold;top:233.10px;left:72.10px;transform-origin:0 50%;transform:scaleX(0.9556);">208</span><div style="position:absolute;left:69.10px;top:243.10px;width:31.00px;height:8.90px;border:0.9px solid #9a9a9a;box-sizing:border-box;"></div><span id="t24" style="position:absolute;white-space:pre;line-height:1;font-size:5.5px;color:#f0f0f0;top:245.35px;left:70.40px;transform-origin:0 50%;">A</span><div style="position:absolute;left:69.10px;top:255.60px;width:131.90px;height:9.20px;border:0.9px solid #9a9a9a;box-sizing:border-box;"></div><span id="t25" style="position:absolute;white-space:pre;line-height:1;font-size:5.5px;color:#f0f0f0;top:257.55px;left:70.60px;transform-origin:0 50%;transform:scaleX(0.9123);">1E-06</span><div style="position:absolute;left:69.10px;top:268.00px;width:131.90px;height:9.10px;border:0.9px solid #9a9a9a;box-sizing:border-box;"></div><span id="t26" style="position:absolute;white-space:pre;line-height:1;font-size:5.5px;color:#f0f0f0;top:269.95px;left:70.60px;transform-origin:0 50%;transform:scaleX(0.9123);">1E-05</span><div style="position:absolute;left:24.20px;top:287.70px;width:39.60px;height:16.40px;border:1.3px solid #d8d8d8;box-sizing:border-box"></div><span id="t27" style="position:absolute;white-space:pre;line-height:1;font-size:5.7px;color:#e6e6e6;top:293.65px;left:44.00px;transform-origin:50% 50%;transform:translateX(-50%) scaleX(0.9481);">Add</span><div style="position:absolute;left:72.50px;top:288.00px;width:39.80px;height:15.80px;border:0.9px solid #9a9a9a;box-sizing:border-box;"></div><span id="t28" style="position:absolute;white-space:pre;line-height:1;font-size:5.7px;color:#e6e6e6;top:293.65px;left:92.40px;transform-origin:50% 50%;transform:translateX(-50%) scaleX(0.9543);">Modify</span><div style="position:absolute;left:121.00px;top:288.00px;width:39.50px;height:15.80px;border:0.9px solid #9a9a9a;box-sizing:border-box;"></div><span id="t29" style="position:absolute;white-space:pre;line-height:1;font-size:5.7px;color:#e6e6e6;top:293.65px;left:140.75px;transform-origin:50% 50%;transform:translateX(-50%) scaleX(0.8874);">Delete</span><div style="position:absolute;left:169.10px;top:288.00px;width:39.70px;height:15.80px;border:0.9px solid #9a9a9a;box-sizing:border-box;"></div><span id="t30" style="position:absolute;white-space:pre;line-height:1;font-size:5.7px;color:#e6e6e6;top:293.65px;left:188.95px;transform-origin:50% 50%;transform:translateX(-50%) scaleX(0.9158);">Update</span><div style="position:absolute;left:24.40px;top:386.90px;width:44.60px;height:15.70px;border:0.9px solid #9a9a9a;box-sizing:border-box;"></div><span id="t31" style="position:absolute;white-space:pre;line-height:1;font-size:5.7px;color:#e6e6e6;top:392.50px;left:46.70px;transform-origin:50% 50%;transform:translateX(-50%) scaleX(1.0047);">Import</span><div style="position:absolute;left:81.90px;top:386.90px;width:45.00px;height:15.70px;border:0.9px solid #9a9a9a;box-sizing:border-box;"></div><span id="t32" style="position:absolute;white-space:pre;line-height:1;font-size:5.7px;color:#e6e6e6;top:392.50px;left:104.40px;transform-origin:50% 50%;transform:translateX(-50%) scaleX(0.9360);">Export</span><div style="position:absolute;left:164.10px;top:386.90px;width:44.90px;height:15.70px;border:0.9px solid #9a9a9a;box-sizing:border-box;"></div><span id="t33" style="position:absolute;white-space:pre;line-height:1;font-size:5.7px;color:#e6e6e6;top:392.50px;left:186.55px;transform-origin:50% 50%;transform:translateX(-50%) scaleX(0.8799);">Close</span><div style="position:absolute;left:26.90px;top:318.50px;width:180.00px;height:9.30px;background:#fff"></div><svg style="position:absolute;left:0;top:0" width="884" height="456" viewBox="0 0 884 456"><rect x="83.3" y="328.3" width="21.4" height="7.7" fill="#00d4ff"/><rect x="83.3" y="336.7" width="21.4" height="7.7" fill="#e19500"/><rect x="68.05" y="327.8" width="0.9" height="52.4" fill="#b9b9b9"/><rect x="68.15" y="319.5" width="0.7" height="7.4" fill="#e2e2e2"/><rect x="82.55" y="327.8" width="0.9" height="52.4" fill="#b9b9b9"/><rect x="82.65" y="319.5" width="0.7" height="7.4" fill="#e2e2e2"/><rect x="104.30" y="327.8" width="0.9" height="52.4" fill="#b9b9b9"/><rect x="104.40" y="319.5" width="0.7" height="7.4" fill="#e2e2e2"/><rect x="133.05" y="327.8" width="0.9" height="52.4" fill="#b9b9b9"/><rect x="133.15" y="319.5" width="0.7" height="7.4" fill="#e2e2e2"/><rect x="162.55" y="327.8" width="0.9" height="52.4" fill="#b9b9b9"/><rect x="162.65" y="319.5" width="0.7" height="7.4" fill="#e2e2e2"/><rect x="26.90" y="335.80" width="180.00" height="0.9" fill="#b9b9b9"/><rect x="26.90" y="344.15" width="180.00" height="0.9" fill="#b9b9b9"/><rect x="26.90" y="352.45" width="180.00" height="0.9" fill="#b9b9b9"/><rect x="26.90" y="360.80" width="180.00" height="0.9" fill="#b9b9b9"/><rect x="26.90" y="369.15" width="180.00" height="0.9" fill="#b9b9b9"/><rect x="26.90" y="377.35" width="180.00" height="0.9" fill="#b9b9b9"/><rect x="26.90" y="380.0" width="180.00" height="0.7" fill="#77777a"/><rect x="26.30" y="318.5" width="0.7" height="62" fill="#77777a"/><rect x="206.90" y="318.5" width="0.7" height="62" fill="#77777a"/></svg><span id="t34" style="position:absolute;white-space:pre;line-height:1;font-size:5.5px;color:#3a3a3a;top:320.55px;left:29.20px;transform-origin:0 50%;transform:scaleX(0.9269);">Name</span><span id="t35" style="position:absolute;white-space:pre;line-height:1;font-size:5.5px;color:#3a3a3a;top:320.55px;left:70.30px;transform-origin:0 50%;transform:scaleX(0.9610);">Unit</span><span id="t36" style="position:absolute;white-space:pre;line-height:1;font-size:5.5px;color:#3a3a3a;top:320.55px;left:85.40px;transform-origin:0 50%;transform:scaleX(0.9053);">Bin</span><span id="t37" style="position:absolute;white-space:pre;line-height:1;font-size:5.5px;color:#3a3a3a;top:320.55px;left:106.80px;transform-origin:0 50%;transform:scaleX(0.8802);">LowerLi...</span><span id="t38" style="position:absolute;white-space:pre;line-height:1;font-size:5.5px;color:#3a3a3a;top:320.55px;left:136.00px;transform-origin:0 50%;transform:scaleX(0.9053);">UpperLi...</span><span id="t39" style="position:absolute;white-space:pre;line-height:1;font-size:5.5px;color:#f0f0f0;top:329.55px;left:29.20px;transform-origin:0 50%;transform:scaleX(0.8906);">Vth.Result</span><span id="t40" style="position:absolute;white-space:pre;line-height:1;font-size:5.5px;color:#f0f0f0;top:329.55px;left:70.60px;transform-origin:0 50%;">A</span><span id="t41" style="position:absolute;white-space:pre;line-height:1;font-size:5.3px;color:#e8fbff;top:329.05px;left:94.20px;transform-origin:0 50%;transform:translateX(-50%);">27</span><span id="t42" style="position:absolute;white-space:pre;line-height:1;font-size:5.5px;color:#f0f0f0;top:329.55px;left:107.00px;transform-origin:0 50%;transform:scaleX(0.8987);">1E-06</span><span id="t43" style="position:absolute;white-space:pre;line-height:1;font-size:5.5px;color:#f0f0f0;top:329.55px;left:136.20px;transform-origin:0 50%;transform:scaleX(0.8987);">1E-05</span><span id="t44" style="position:absolute;white-space:pre;line-height:1;font-size:5.5px;color:#f0f0f0;top:337.95px;left:29.20px;transform-origin:0 50%;transform:scaleX(0.8906);">Vth.Result</span><span id="t45" style="position:absolute;white-space:pre;line-height:1;font-size:5.5px;color:#f0f0f0;top:337.95px;left:70.60px;transform-origin:0 50%;">A</span><span id="t46" style="position:absolute;white-space:pre;line-height:1;font-size:5.3px;color:#ffe9c0;top:337.45px;left:94.20px;transform-origin:0 50%;transform:translateX(-50%);">208</span><span id="t47" style="position:absolute;white-space:pre;line-height:1;font-size:5.5px;color:#f0f0f0;top:337.95px;left:107.00px;transform-origin:0 50%;transform:scaleX(0.8987);">1E-06</span><span id="t48" style="position:absolute;white-space:pre;line-height:1;font-size:5.5px;color:#f0f0f0;top:337.95px;left:136.20px;transform-origin:0 50%;transform:scaleX(0.8987);">1E-05</span><div style="position:absolute;left:212.00px;top:208.00px;width:134.00px;height:176.00px;overflow:hidden"><div style="position:absolute;left:3.40px;top:6.60px;width:145.00px;height:145.00px;border-radius:50%;background:radial-gradient(circle closest-side,#fff 0%,rgba(255,255,255,0) 100%),conic-gradient(from -7deg,hsl(270,100%,50%),hsl(240,100%,50%) 30deg,hsl(210,100%,50%) 60deg,hsl(180,100%,50%) 90deg,hsl(150,100%,50%) 120deg,hsl(120,100%,50%) 150deg,hsl(90,100%,50%) 180deg,hsl(60,100%,50%) 210deg,hsl(30,100%,50%) 240deg,hsl(0,100%,50%) 270deg,hsl(330,100%,50%) 300deg,hsl(300,100%,50%) 330deg,hsl(270,100%,50%) 360deg)"></div><div style="position:absolute;left:75.00px;top:78.20px;width:1.8px;height:1.8px;border-radius:50%;background:#2d4a55"></div></div><div style="position:absolute;left:287.90px;top:370.60px;width:1.70px;height:7.00px;background:#f6f6f6"></div></div></div><div style="position:absolute;left:351.80px;top:257.90px;width:130.40px;height:90.10px;background:#fff;border:0.8px solid #c4c4c4;box-sizing:border-box;box-shadow:0.6px 0.6px 1.2px rgba(0,0,0,0.35)"></div><span id="t49" style="position:absolute;white-space:pre;line-height:1;font-size:6.7px;color:#5a5a5a;top:261.55px;left:355.30px;transform-origin:0 50%;transform:scaleX(1.0758);">Index:32</span><span id="t50" style="position:absolute;white-space:pre;line-height:1;font-size:6.7px;color:#5a5a5a;top:271.22px;left:355.30px;transform-origin:0 50%;transform:scaleX(1.0735);">Subsite Index:0</span><span id="t51" style="position:absolute;white-space:pre;line-height:1;font-size:6.7px;color:#5a5a5a;top:280.89px;left:355.30px;transform-origin:0 50%;transform:scaleX(1.0894);">Coordinate:(-3,-1)</span><span id="t52" style="position:absolute;white-space:pre;line-height:1;font-size:6.7px;color:#5a5a5a;top:290.56px;left:355.30px;transform-origin:0 50%;transform:scaleX(1.1083);">Die Mark Index:-1</span><span id="t53" style="position:absolute;white-space:pre;line-height:1;font-size:6.7px;color:#5a5a5a;top:300.23px;left:355.30px;transform-origin:0 50%;transform:scaleX(1.0358);">Bin:208</span><span id="t54" style="position:absolute;white-space:pre;line-height:1;font-size:6.7px;color:#5a5a5a;top:309.90px;left:355.30px;transform-origin:0 50%;transform:scaleX(1.0931);">AbsoluteIndex:32</span><span id="t55" style="position:absolute;white-space:pre;line-height:1;font-size:6.7px;color:#5a5a5a;top:319.57px;left:355.30px;transform-origin:0 50%;transform:scaleX(1.0323);">Data:</span><span id="t56" style="position:absolute;white-space:pre;line-height:1;font-size:6.7px;color:#5a5a5a;top:329.24px;left:355.30px;transform-origin:0 50%;transform:scaleX(1.0602);">Vth.Result(A)=9.56092916408597E-06</span><span id="t57" style="position:absolute;white-space:pre;line-height:1;font-size:6.7px;color:#5a5a5a;top:338.91px;left:355.30px;transform-origin:0 50%;transform:scaleX(1.0449);">CALCULATION.R(ohms)=12</span></div></div><div style="position:absolute;left:869.00px;top:38.00px;width:10.20px;height:410.60px;background:#f0f0f0"></div><div style="position:absolute;left:869.00px;top:47.50px;width:10.20px;height:370.30px;background:#cdcdcd"></div><div style="position:absolute;left:14.50px;top:439.00px;width:864.70px;height:9.60px;background:#f0f0f0"></div><div style="position:absolute;left:24.00px;top:439.00px;width:823.50px;height:9.60px;background:#cdcdcd"></div><svg style="position:absolute;left:0;top:0" width="884" height="456" viewBox="0 0 884 456" fill="none" stroke="#5a5a5a" stroke-width="1.25"><path d="M872.3 43.6 L874.1 41.8 L875.9 43.6"/><path d="M872.3 433.7 L874.1 435.5 L875.9 433.7"/><path d="M20.1 441.9 L18.2 443.8 L20.1 445.7"/><path d="M863.4 441.9 L865.3 443.8 L863.4 445.7"/></svg></div></body></html>
